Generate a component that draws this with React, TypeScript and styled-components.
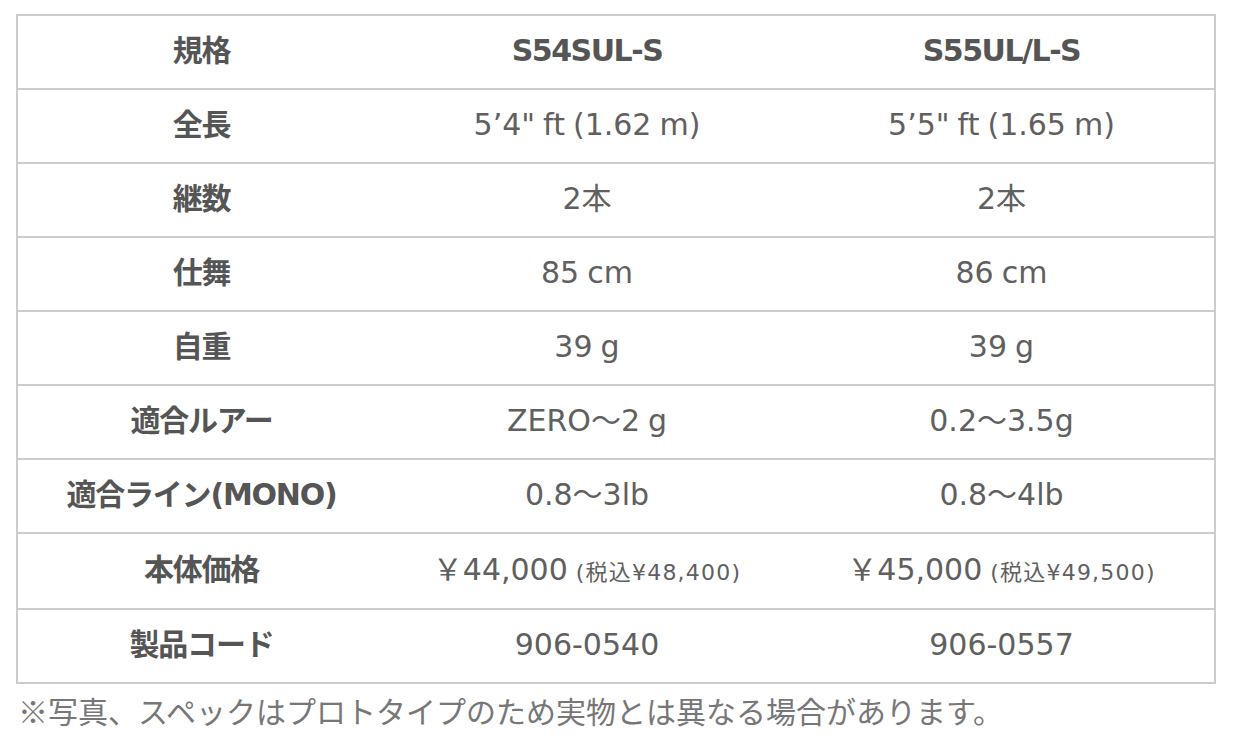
import React from "react";
import styled, { createGlobalStyle } from "styled-components";

const Global = createGlobalStyle`
  html, body { margin: 0; padding: 0; background: #fff; }
  body { font-family: "DejaVu Sans", "Noto Sans CJK JP", sans-serif; }
`;

const Page = styled.div`
  padding: 14px 18px 0 16px;
`;

const Table = styled.table`
  width: 1198px;
  border-collapse: collapse;
  border: 2px solid #cccccc;
  table-layout: fixed;
`;

const Row = styled.tr`
  border-bottom: 2px solid #cccccc;
`;

const Label = styled.th<{ $tall?: boolean }>`
  height: ${(p) => (p.$tall ? 76 : 74)}px;
  padding: 0 0 3px;
  box-sizing: border-box;
  text-align: center;
  vertical-align: middle;
  font-family: "DejaVu Sans", "Noto Sans CJK JP", sans-serif;
  font-weight: 700;
  font-size: 30px;
  line-height: 1.2;
  letter-spacing: -1.2px;
  color: #555555;
`;

const Head = styled.th`
  height: 74px;
  padding: 0 0 3px;
  box-sizing: border-box;
  text-align: center;
  vertical-align: middle;
  font-family: "DejaVu Sans", "Noto Sans CJK JP", sans-serif;
  font-weight: 700;
  font-size: 30px;
  line-height: 1.2;
  letter-spacing: -1.5px;
  color: #555555;
`;

const Cell = styled.td<{ $tall?: boolean }>`
  height: ${(p) => (p.$tall ? 76 : 74)}px;
  padding: 0 0 3px;
  box-sizing: border-box;
  text-align: center;
  vertical-align: middle;
  font-family: "DejaVu Sans", "Noto Sans CJK JP", sans-serif;
  font-weight: 400;
  font-size: 30px;
  line-height: 1.2;
  word-spacing: -1.5px;
  color: #606060;
`;

const Small = styled.span`
  font-size: 22px;
  letter-spacing: 1.2px;
  word-spacing: 0;
`;

const Note = styled.p`
  margin: 4px 0 0 2px;
  font-family: "Noto Sans CJK JP", sans-serif;
  font-size: 30px;
  line-height: 45px;
  color: #777777;
`;

type Spec = { label: string; a: React.ReactNode; b: React.ReactNode; tall?: boolean };

const specs: Spec[] = [
  { label: "全長", a: "5’4\" ft (1.62 m)", b: "5’5\" ft (1.65 m)" },
  { label: "継数", a: "2本", b: "2本" },
  { label: "仕舞", a: "85 cm", b: "86 cm" },
  { label: "自重", a: "39 g", b: "39 g" },
  { label: "適合ルアー", a: "ZERO〜2 g", b: "0.2〜3.5g" },
  { label: "適合ライン(MONO)", a: "0.8〜3lb", b: "0.8〜4lb" },
  {
    label: "本体価格",
    tall: true,
    a: (
      <>
        ￥44,000 <Small>(税込¥48,400)</Small>
      </>
    ),
    b: (
      <>
        ￥45,000 <Small>(税込¥49,500)</Small>
      </>
    ),
  },
  { label: "製品コード", a: "906-0540", b: "906-0557" },
];

export default function App() {
  return (
    <Page>
      <Global />
      <Table>
        <colgroup>
          <col style={{ width: 368 }} />
          <col style={{ width: 404 }} />
          <col style={{ width: 426 }} />
        </colgroup>
        <tbody>
          <Row>
            <Label>規格</Label>
            <Head>S54SUL-S</Head>
            <Head>S55UL/L-S</Head>
          </Row>
          {specs.map((s) => (
            <Row key={s.label}>
              <Label $tall={s.tall}>{s.label}</Label>
              <Cell $tall={s.tall}>{s.a}</Cell>
              <Cell $tall={s.tall}>{s.b}</Cell>
            </Row>
          ))}
        </tbody>
      </Table>
      <Note>※写真、スペックはプロトタイプのため実物とは異なる場合があります。</Note>
    </Page>
  );
}
